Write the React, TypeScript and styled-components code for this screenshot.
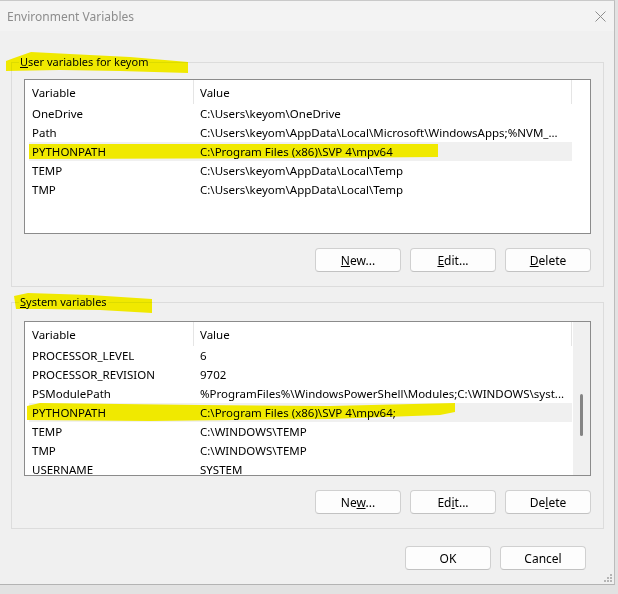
import React from 'react';
import styled, { createGlobalStyle } from 'styled-components';

const GlobalStyle = createGlobalStyle`
  html, body {
    margin: 0;
    padding: 0;
    background: #e2e2e2;
  }
  body {
    font-family: "Noto Sans", "Segoe UI", sans-serif;
    font-size: 11.5px;
    color: #000;
  }
`;

const Page = styled.div`
  position: relative;
  width: 618px;
  height: 594px;
  overflow: hidden;
`;

const Window = styled.div`
  position: relative;
  width: 615px;
  box-sizing: border-box;
  background: #f0f0f0;
  border-top: 1px solid #c9c9c9;
  border-right: 1px solid #bcbcbc;
  border-bottom: 1px solid #b3b3b3;
  display: flex;
  flex-direction: column;
`;

const TitleBar = styled.div`
  height: 30px;
  background: #f3f3f3;
  display: flex;
  align-items: center;
  justify-content: space-between;
  padding: 0 8px 0 7px;
  color: #8d8d8d;
  font-size: 12px;
`;

const Body = styled.div`
  padding: 23px 10px 14px 11px;
  display: flex;
  flex-direction: column;
`;

const Group = styled.fieldset<{ $top: number; $spaced?: boolean }>`
  margin: ${(p) => (p.$spaced ? '7px 0 0 0' : '0')};
  padding: ${(p) => p.$top}px 12px 14px 12px;
  border: 1px solid #dcdcdc;
  min-width: 0;
`;

const Legend = styled.legend`
  padding: 0 1px;
  margin-left: -5px;
  line-height: 16px;
  font-size: 11px;
`;

const List = styled.div`
  height: 155px;
  box-sizing: border-box;
  border: 1px solid #8b8b8b;
  background: #fff;
  display: flex;
  overflow: hidden;
`;

const Table = styled.div`
  flex: 1;
  min-width: 0;
  display: flex;
  flex-direction: column;
`;

const HeaderRow = styled.div`
  flex: none;
  height: 24px;
  display: flex;
`;

const HeaderCell = styled.div<{ $width?: number; $pad: number }>`
  ${(p) => (p.$width ? `width: ${p.$width}px; flex: none;` : 'flex: 1;')}
  box-sizing: border-box;
  border-right: 1px solid #e5e5e5;
  padding-left: ${(p) => p.$pad}px;
  display: flex;
  align-items: center;
`;

const Row = styled.div<{ $selected?: boolean }>`
  flex: none;
  height: 19px;
  margin-left: 4px;
  display: flex;
  align-items: center;
  background: ${(p) => (p.$selected ? '#f0f0f0' : 'transparent')};
`;

const NameCell = styled.div`
  width: 165px;
  flex: none;
  box-sizing: border-box;
  padding-left: 3px;
  white-space: nowrap;
  overflow: hidden;
`;

const ValueCell = styled.div`
  flex: 1;
  min-width: 0;
  padding-left: 6px;
  white-space: nowrap;
  overflow: hidden;
`;

const Gutter = styled.div<{ $scroll?: boolean }>`
  flex: none;
  width: 18px;
  box-sizing: border-box;
  background: ${(p) => (p.$scroll ? '#f0f0f0' : '#fff')};
  border-left: ${(p) => (p.$scroll ? '1px solid #fff' : 'none')};
`;

const Thumb = styled.div`
  margin: 72px 0 0 7px;
  width: 3px;
  height: 42px;
  border-radius: 2px;
  background: #858585;
`;

const ButtonRow = styled.div<{ $top: number; $right?: number }>`
  display: flex;
  justify-content: flex-end;
  gap: 9px;
  margin-top: ${(p) => p.$top}px;
  padding-right: ${(p) => p.$right ?? 0}px;
`;

const Button = styled.button`
  width: 86px;
  height: 24px;
  box-sizing: border-box;
  padding: 0;
  border: 1px solid #d0d0d0;
  border-bottom-color: #c2c2c2;
  border-radius: 4px;
  background: #fdfdfd;
  font-family: inherit;
  font-size: 12px;
  color: #000;
`;

const Grip = styled.svg`
  position: absolute;
  right: 2px;
  bottom: 2px;
`;

const Marks = styled.svg`
  position: absolute;
  top: 0;
  left: 0;
  pointer-events: none;
  mix-blend-mode: darken;
`;

type Variable = { name: string; value: string; selected?: boolean };

const userVars: Variable[] = [
  { name: 'OneDrive', value: 'C:\\Users\\keyom\\OneDrive' },
  { name: 'Path', value: 'C:\\Users\\keyom\\AppData\\Local\\Microsoft\\WindowsApps;%NVM_...' },
  { name: 'PYTHONPATH', value: 'C:\\Program Files (x86)\\SVP 4\\mpv64', selected: true },
  { name: 'TEMP', value: 'C:\\Users\\keyom\\AppData\\Local\\Temp' },
  { name: 'TMP', value: 'C:\\Users\\keyom\\AppData\\Local\\Temp' },
];

const systemVars: Variable[] = [
  { name: 'PROCESSOR_LEVEL', value: '6' },
  { name: 'PROCESSOR_REVISION', value: '9702' },
  { name: 'PSModulePath', value: '%ProgramFiles%\\WindowsPowerShell\\Modules;C:\\WINDOWS\\syst...' },
  { name: 'PYTHONPATH', value: 'C:\\Program Files (x86)\\SVP 4\\mpv64;', selected: true },
  { name: 'TEMP', value: 'C:\\WINDOWS\\TEMP' },
  { name: 'TMP', value: 'C:\\WINDOWS\\TEMP' },
  { name: 'USERNAME', value: 'SYSTEM' },
];

const VarList: React.FC<{ rows: Variable[]; scroll?: boolean }> = ({ rows, scroll }) => (
  <List>
    <Table>
      <HeaderRow>
        <HeaderCell $width={169} $pad={7}>Variable</HeaderCell>
        <HeaderCell $pad={6}>Value</HeaderCell>
      </HeaderRow>
      {rows.map((r) => (
        <Row key={r.name} $selected={r.selected}>
          <NameCell>{r.name}</NameCell>
          <ValueCell>{r.value}</ValueCell>
        </Row>
      ))}
    </Table>
    <Gutter $scroll={scroll}>{scroll && <Thumb />}</Gutter>
  </List>
);

// hand-drawn highlighter strokes over the screenshot
const highlights = [
  '6,61 14,58 31,52 70,54 130,57 188,62 188,73 120,71 60,70 6,71',
  '29,144 438,144 438,157 300,158 29,159',
  '14,296 28,293 90,295 152,299 152,313 100,310 40,309 16,309',
  '27,406 40,403 200,405 330,406 455,403 455,412 440,415 330,419 150,421 27,420',
];

export default function App() {
  return (
    <Page>
      <GlobalStyle />
      <Window>
        <TitleBar>
          <span>Environment Variables</span>
          <svg width="11" height="11" viewBox="0 0 11 11">
            <path d="M0.5 0.5 L10.5 10.5 M10.5 0.5 L0.5 10.5" stroke="#8d8d8d" strokeWidth="1" />
          </svg>
        </TitleBar>
        <Body>
          <Group $top={9}>
            <Legend>
              <u>U</u>ser variables for keyom
            </Legend>
            <VarList rows={userVars} />
            <ButtonRow $top={14}>
              <Button><u>N</u>ew...</Button>
              <Button><u>E</u>dit...</Button>
              <Button><u>D</u>elete</Button>
            </ButtonRow>
          </Group>
          <Group $top={11} $spaced>
            <Legend>
              <u>S</u>ystem variables
            </Legend>
            <VarList rows={systemVars} scroll />
            <ButtonRow $top={14}>
              <Button>Ne<u>w</u>...</Button>
              <Button>Ed<u>i</u>t...</Button>
              <Button>De<u>l</u>ete</Button>
            </ButtonRow>
          </Group>
          <ButtonRow $top={17} $right={18}>
            <Button>OK</Button>
            <Button>Cancel</Button>
          </ButtonRow>
        </Body>
        <Grip width="8" height="8" viewBox="0 0 8 8">
          <rect x="6" y="0" width="2" height="2" fill="#b5b5b5" />
          <rect x="3" y="3" width="2" height="2" fill="#b5b5b5" />
          <rect x="6" y="3" width="2" height="2" fill="#b5b5b5" />
          <rect x="0" y="6" width="2" height="2" fill="#b5b5b5" />
          <rect x="3" y="6" width="2" height="2" fill="#b5b5b5" />
          <rect x="6" y="6" width="2" height="2" fill="#b5b5b5" />
        </Grip>
      </Window>
      <Marks width="618" height="594" viewBox="0 0 618 594">
        {highlights.map((pts) => (
          <polygon key={pts} points={pts} fill="#f4e900" />
        ))}
      </Marks>
    </Page>
  );
}
